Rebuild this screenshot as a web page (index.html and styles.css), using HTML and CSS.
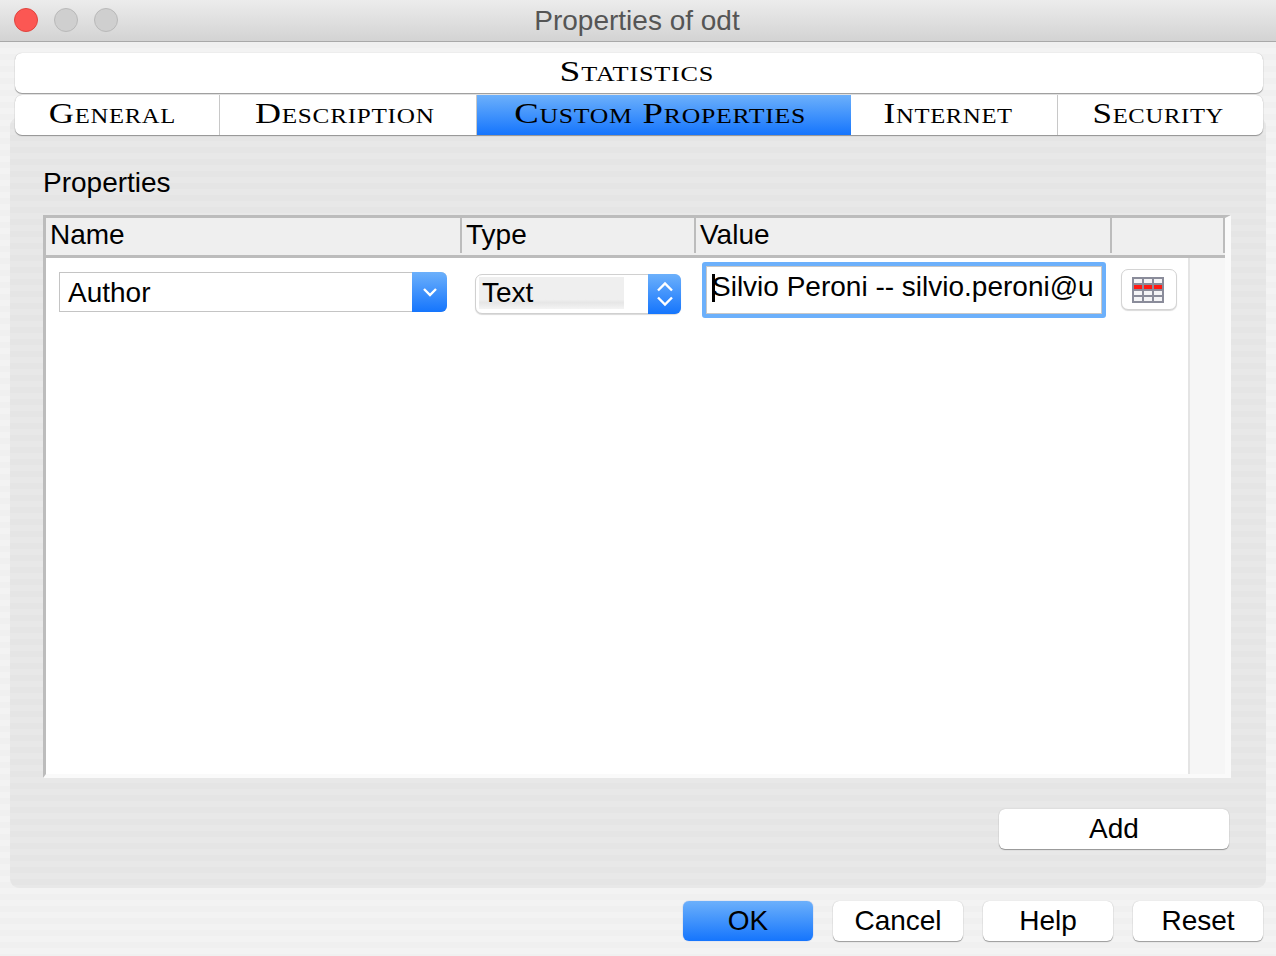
FILE: index.html
```html
<!DOCTYPE html>
<html lang="en">
<head>
<meta charset="UTF-8" />
<title>Properties of odt</title>
<link rel="stylesheet" href="styles.css">
</head>
<body>
<div class="window">
  <!-- title bar -->
  <header class="titlebar">
    <div class="lights">
      <span class="light close"></span>
      <span class="light"></span>
      <span class="light"></span>
    </div>
    <span class="title">Properties of odt</span>
  </header>

  <!-- tabs -->
  <nav class="tabs">
    <div class="tab-row single"><span class="tab"><span class="tab-label">Statistics</span></span></div>
    <div class="tab-row">
      <span class="tab t-general"><span class="tab-label">General</span></span>
      <span class="tab t-desc"><span class="tab-label">Description</span></span>
      <span class="tab t-custom active"><span class="tab-label">Custom Properties</span></span>
      <span class="tab t-internet"><span class="tab-label">Internet</span></span>
      <span class="tab t-security"><span class="tab-label">Security</span></span>
    </div>
  </nav>

  <!-- panel -->
  <main class="panel">
    <h2 class="panel-title">Properties</h2>

    <div class="table">
      <div class="thead">
        <span class="th">Name</span>
        <span class="th">Type</span>
        <span class="th">Value</span>
        <span class="th"></span>
      </div>
      <div class="tbody">
        <div class="cell cell-name">
          <div class="combo">
            <span class="combo-text">Author</span>
            <span class="combo-btn">
              <svg width="16" height="10" viewBox="0 0 16 10"><path d="M2 2l6 6 6-6" fill="none" stroke="#fff" stroke-width="2.4"/></svg>
            </span>
          </div>
        </div>
        <div class="cell cell-type">
          <div class="select">
            <span class="select-text">Text</span>
            <span class="select-btn">
              <svg width="18" height="26" viewBox="0 0 18 26"><path d="M2 9.500l7-7 7 7M2 16.500l7 7 7-7" fill="none" stroke="#fff" stroke-width="2.400"/></svg>
            </span>
          </div>
        </div>
        <div class="cell cell-value">
          <div class="input"><span class="caret"></span>Silvio Peroni -- silvio.peroni@u</div>
        </div>
        <div class="cell cell-icon">
          <button class="icon-btn">
            <svg width="32" height="26" viewBox="0 0 32 26">
              <rect width="32" height="26" fill="#8a8c9a"/>
              <g fill="#f4f4f6">
                <rect x="2" y="2" width="8" height="4"/><rect x="12" y="2" width="8" height="4"/><rect x="22" y="2" width="8" height="4"/>
                <rect x="2" y="14" width="8" height="4"/><rect x="12" y="14" width="8" height="4"/><rect x="22" y="14" width="8" height="4"/>
                <rect x="2" y="20" width="8" height="4"/><rect x="12" y="20" width="8" height="4"/><rect x="22" y="20" width="8" height="4"/>
              </g>
              <g fill="#ff1a12">
                <rect x="2" y="8" width="8" height="4"/><rect x="12" y="8" width="8" height="4"/><rect x="22" y="8" width="8" height="4"/>
              </g>
            </svg>
          </button>
        </div>
        <div class="scroll-strip"></div>
      </div>
    </div>

    <div class="panel-actions"><button class="btn btn-add">Add</button></div>
  </main>

  <!-- footer buttons -->
  <footer class="footer">
    <button class="btn primary">OK</button>
    <button class="btn">Cancel</button>
    <button class="btn">Help</button>
    <button class="btn">Reset</button>
  </footer>
</div>
</body>
</html>
```

FILE: styles.css
```css
:root{--blue-top:#6cb0fb;--blue-bot:#1575fd;--line:#bcbcbc;}
*{box-sizing:border-box;}
html,body{margin:0;height:100%;}
body{font-family:"Liberation Sans",Arial,sans-serif;color:#000;overflow:hidden;}

.window{
  width:1276px;height:956px;display:flex;flex-direction:column;
  background:repeating-linear-gradient(180deg,#f3f3f3 0 6px,#f0f0f0 6px 12px);
}

/* title bar ----------------------------------------------- */
.titlebar{
  flex:none;height:42px;display:flex;align-items:center;justify-content:center;position:relative;
  background:linear-gradient(180deg,#ececec 0%,#d3d3d3 100%);border-bottom:1px solid #a9a9a9;
}
.lights{position:absolute;left:14px;top:8px;display:flex;gap:16px;}
.light{width:24px;height:24px;border-radius:50%;background:#cfcfcf;border:1px solid #b9b9b9;}
.light.close{background:#fc5753;border-color:#e0443e;}
.title{font-size:28px;color:#555;padding-right:2px;}

/* tabs ---------------------------------------------------- */
.tabs{flex:none;position:relative;z-index:1;padding:11px 13px 0 15px;display:flex;flex-direction:column;gap:2px;}
.tab-row{
  height:40px;display:flex;background:#fff;border-radius:7px;
  box-shadow:0 1px 1px rgba(0,0,0,.35),0 0 1px rgba(0,0,0,.25);overflow:hidden;
}
.tab{
  display:flex;align-items:center;justify-content:center;padding-bottom:4px;
  font-family:"Liberation Serif",serif;font-variant:small-caps;font-size:30px;letter-spacing:.6px;color:#000;
  border-right:1px solid #c8c8c8;line-height:1;
}
/* the face in the shot is a wide copperplate, so stretch the serif */
.tab-label{display:inline-block;white-space:nowrap;transform:scaleX(1.17);}
.single .tab-label{transform:scaleX(1.25);}
.t-desc .tab-label{transform:scaleX(1.2);}
.t-custom .tab-label{transform:scaleX(1.225);}
.tab:last-child{border-right:none;}
.single .tab{width:100%;padding-right:4px;}
.t-general{width:205px;padding-right:10px;}
.t-desc{width:257px;padding-right:6px;}
.t-custom{width:374px;padding-right:8px;}
.t-internet{width:207px;padding-right:11px;}
.t-security{width:205px;padding-right:4px;}
.tab.active{background:linear-gradient(180deg,var(--blue-top),var(--blue-bot));border-right:none;}

/* panel --------------------------------------------------- */
.panel{
  flex:none;height:771px;margin:-18px 10px 0;padding:48px 35px 0 33px;border-radius:9px;
  background:repeating-linear-gradient(180deg,#e8e8e8 0 6px,#e5e5e5 6px 12px);
}
.panel-title{margin:0 0 14px;font-weight:400;font-size:28px;line-height:36px;}

.table{
  height:563px;width:1188px;display:flex;flex-direction:column;
  border-top:3px solid var(--line);border-left:3px solid var(--line);
  border-right:6px solid #fafafa;border-bottom:4px solid #fafafa;
}
.thead{
  flex:none;height:40px;display:grid;grid-template-columns:416px 234px 416px 113px;
  background:#efefef;border-bottom:3px solid var(--line);
}
.th{
  font-size:28px;line-height:34px;padding-left:4px;border-right:2px solid var(--line);
  margin-bottom:2px;
}
.tbody{
  flex:1;display:grid;grid-template-columns:416px 234px 416px 76px 37px;background:#fff;
}
.cell{display:flex;align-items:flex-start;}
.scroll-strip{background:#f6f6f6;border-left:2px solid #e4e4e4;}

.cell-name{padding:14px 0 0 13px;}
.combo{
  width:388px;height:40px;display:flex;background:#fff;border:1px solid #c4c4c4;border-right:none;
  border-radius:0 6px 6px 0;
}
.combo-text{flex:1;font-size:28px;line-height:40px;padding-left:8px;}
.combo-btn,.select-btn{
  flex:none;display:flex;align-items:center;justify-content:center;
  background:linear-gradient(180deg,var(--blue-top),var(--blue-bot));border-radius:0 6px 6px 0;
}
.combo-btn{width:35px;height:40px;margin:-1px 0;}

.cell-type{padding:16px 0 0 13px;}
.select{
  width:206px;height:40px;display:flex;background:#fff;border:1px solid #d0d0d0;border-radius:7px;
  box-shadow:0 1px 1px rgba(0,0,0,.15);
}
.select-text{
  width:145px;height:32px;margin:2px 0 0 3px;padding-left:3px;font-size:28px;line-height:32px;
  background:linear-gradient(180deg,#efefef 0 70%,#e6e6e6 80%,#f4f4f4 100%);
}
.select-btn{width:33px;height:40px;margin:-1px -1px -1px auto;}

.cell-value{padding:4px 0 0 6px;}
.input{
  position:relative;width:404px;height:56px;padding-left:6px;background:#fff;white-space:nowrap;
  border:4px solid #6cb0fb;border-radius:3px;font-size:28px;line-height:42px;overflow:hidden;
  box-shadow:inset 0 0 0 1px #c8c8c8;
}
.caret{position:absolute;left:6px;top:8px;width:3px;height:28px;background:#000;}

.cell-icon{padding:11px 0 0 9px;}
.icon-btn{
  width:56px;height:41px;padding:1px 2px 0 0;display:flex;align-items:center;justify-content:center;
  background:#fff;border:1px solid #d4d4d4;border-radius:7px;box-shadow:0 1px 1px rgba(0,0,0,.15);
}

.panel-actions{display:flex;justify-content:flex-end;padding:31px 2px 0 0;}

/* buttons ------------------------------------------------- */
.btn{
  width:130px;height:40px;padding:0;background:#fff;border:none;border-radius:6px;color:#000;
  font-family:inherit;font-size:28px;line-height:38px;
  box-shadow:0 1px 1px rgba(0,0,0,.35),0 0 1px rgba(0,0,0,.25);
}
.btn-add{width:230px;}
.btn.primary{background:linear-gradient(180deg,var(--blue-top),var(--blue-bot));box-shadow:0 0 1px rgba(0,60,200,.6);}
.footer{flex:none;display:flex;justify-content:flex-end;gap:20px;padding:13px 13px 0 0;}
```
